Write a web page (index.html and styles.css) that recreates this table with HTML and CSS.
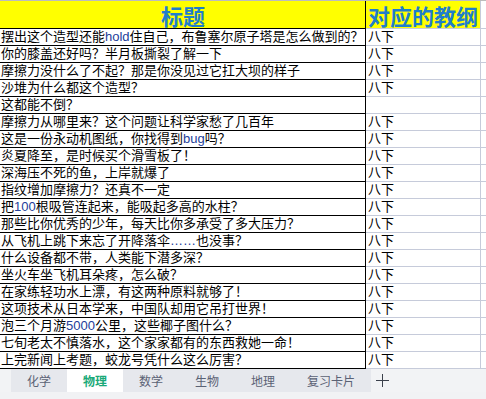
FILE: index.html
```html
<!DOCTYPE html>
<html lang="zh-CN">
<head>
<meta charset="utf-8">
<title>物理</title>
<link rel="stylesheet" href="styles.css">
</head>
<body>
<div class="sheet">
  <div class="grid">
    <div class="c a head center">标题</div><div class="c b head yellow">对应的教纲</div><div class="c x"></div>
    <div class="c a">摆出这个造型还能<span class="lat">hold</span>住自己，布鲁塞尔原子塔是怎么做到的？</div><div class="c b">八下</div><div class="c x"></div>
    <div class="c a">你的膝盖还好吗？半月板撕裂了解一下</div><div class="c b">八下</div><div class="c x"></div>
    <div class="c a">摩擦力没什么了不起？那是你没见过它扛大坝的样子</div><div class="c b">八下</div><div class="c x"></div>
    <div class="c a">沙堆为什么都这个造型？</div><div class="c b">八下</div><div class="c x"></div>
    <div class="c a">这都能不倒？</div><div class="c b"></div><div class="c x"></div>
    <div class="c a">摩擦力从哪里来？这个问题让科学家愁了几百年</div><div class="c b">八下</div><div class="c x"></div>
    <div class="c a">这是一份永动机图纸，你找得到<span class="lat">bug</span>吗？</div><div class="c b">八下</div><div class="c x"></div>
    <div class="c a">炎夏降至，是时候买个滑雪板了！</div><div class="c b">八下</div><div class="c x"></div>
    <div class="c a">深海压不死的鱼，上岸就爆了</div><div class="c b">八下</div><div class="c x"></div>
    <div class="c a">指纹增加摩擦力？还真不一定</div><div class="c b">八下</div><div class="c x"></div>
    <div class="c a">把<span class="lat">100</span>根吸管连起来，能吸起多高的水柱？</div><div class="c b">八下</div><div class="c x"></div>
    <div class="c a">那些比你优秀的少年，每天比你多承受了多大压力？</div><div class="c b">八下</div><div class="c x"></div>
    <div class="c a">从飞机上跳下来忘了开降落伞<span class="lat">……</span>也没事？</div><div class="c b">八下</div><div class="c x"></div>
    <div class="c a">什么设备都不带，人类能下潜多深？</div><div class="c b">八下</div><div class="c x"></div>
    <div class="c a">坐火车坐飞机耳朵疼，怎么破？</div><div class="c b">八下</div><div class="c x"></div>
    <div class="c a">在家练轻功水上漂，有这两种原料就够了！</div><div class="c b">八下</div><div class="c x"></div>
    <div class="c a">这项技术从日本学来，中国队却用它吊打世界！</div><div class="c b">八下</div><div class="c x"></div>
    <div class="c a">泡三个月游<span class="lat">5000</span>公里，这些椰子图什么？</div><div class="c b">八下</div><div class="c x"></div>
    <div class="c a">七旬老太不慎落水，这个家家都有的东西救她一命！</div><div class="c b">八下</div><div class="c x"></div>
    <div class="c a">上完新闻上考题，蛟龙号凭什么这么厉害？</div><div class="c b">八下</div><div class="c x"></div>
  </div>
  <div class="tabbar">
    <div class="tabs">
      <div class="tab">化学</div>
      <div class="tab active">物理</div>
      <div class="tab">数学</div>
      <div class="tab">生物</div>
      <div class="tab">地理</div>
      <div class="tab">复习卡片</div>
    </div>
    <div class="add">
      <svg width="13" height="13" viewBox="0 0 13 13"><path d="M6.5 0V13M0 6.5H13" stroke="#3b404b" stroke-width="1" fill="none"/></svg>
    </div>
  </div>
  <div class="strip"></div>
</div>
</body>
</html>
```

FILE: styles.css
```css
html, body {
  margin: 0;
  padding: 0;
  background: #ffffff;
  overflow: hidden;
}

.sheet {
  width: 486px;
  height: 399px;
  display: flex;
  flex-direction: column;
  font-family: "Liberation Sans", "Noto Sans CJK SC", sans-serif;
}

.grid {
  display: grid;
  grid-template-columns: 366px 115px 1fr;
  grid-template-rows: 28px;
  grid-auto-rows: 17px;
  border-top: 1px solid #bcbcbc;
}

.c {
  box-sizing: border-box;
  border-bottom: 1px solid #c6cbda;
  overflow: hidden;
  white-space: nowrap;
  font-size: 13px;
  line-height: 16px;
  color: #000000;
  padding-left: 1px;
}

.a {
  border-right: 1px solid #000000;
  border-bottom-color: #000000;
}

.b {
  border-right: 1px solid #c6cbda;
  padding-left: 2px;
}

.head {
  background: #ffff00;
  font-family: "Noto Sans CJK SC", sans-serif;
  font-size: 22px;
  font-weight: bold;
  line-height: 25px;
  padding-top: 2px;
  overflow: visible;
  color: #1f7ecb;
}

.center {
  text-align: center;
}

.lat {
  color: #23409a;
}

.tabbar {
  height: 23px;
  display: flex;
  align-items: stretch;
  background: #f2f3f5;
}

.tabs {
  display: flex;
  margin-left: 11px;
  background: #e6e8ed;
}

.tab {
  padding: 0 16px;
  font-family: "Noto Sans CJK SC", sans-serif;
  font-size: 12px;
  line-height: 23px;
  color: #5b6275;
}

.tab.active {
  background: #ffffff;
  color: #19a978;
  font-weight: bold;
}

.add {
  margin-left: 5px;
  display: flex;
  align-items: center;
}

.add svg {
  display: block;
}

.strip {
  flex: 1;
  background: #f1f2f4;
}
```
